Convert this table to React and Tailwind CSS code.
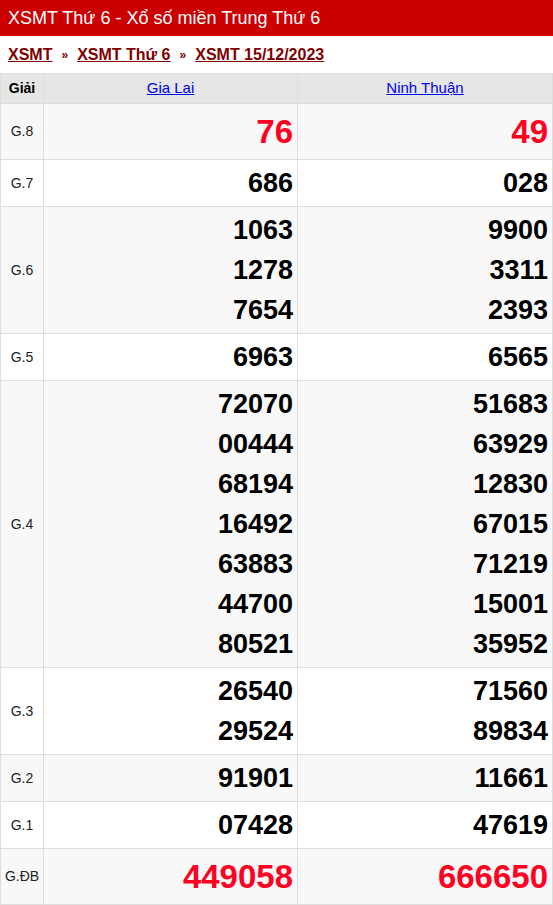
const rows = [
  { label: "G.8", a: ["76"], b: ["49"], big: true },
  { label: "G.7", a: ["686"], b: ["028"] },
  { label: "G.6", a: ["1063", "1278", "7654"], b: ["9900", "3311", "2393"] },
  { label: "G.5", a: ["6963"], b: ["6565"] },
  {
    label: "G.4",
    a: ["72070", "00444", "68194", "16492", "63883", "44700", "80521"],
    b: ["51683", "63929", "12830", "67015", "71219", "15001", "35952"],
  },
  { label: "G.3", a: ["26540", "29524"], b: ["71560", "89834"] },
  { label: "G.2", a: ["91901"], b: ["11661"] },
  { label: "G.1", a: ["07428"], b: ["47619"] },
  { label: "G.ĐB", a: ["449058"], b: ["666650"], big: true },
];

function NumCell({ nums, big, shade }) {
  return (
    <td className={`border border-[#dddddd] px-[4px] py-[3px] text-right align-middle ${shade}`}>
      {nums.map((n) => (
        <div
          key={n}
          className={
            big
              ? "text-[33px] leading-[49px] font-bold text-[#ff0022]"
              : "text-[27px] leading-[40px] font-bold text-black"
          }
        >
          {n}
        </div>
      ))}
    </td>
  );
}

export default function App() {
  return (
    <div className="w-[553px] bg-white font-['Liberation_Sans',Arial,sans-serif]">
      <div className="h-[36px] bg-[#cc0000] px-[8px] flex items-center text-white text-[18px]">
        XSMT Thứ 6 - Xổ số miền Trung Thứ 6
      </div>
      <div className="h-[37px] px-[8px] flex items-center gap-[9px] text-[16px] font-bold text-[#800000]">
        <a className="underline">XSMT</a>
        <span className="text-[12px]">»</span>
        <a className="underline">XSMT Thứ 6</a>
        <span className="text-[12px]">»</span>
        <a className="underline">XSMT 15/12/2023</a>
      </div>
      <table className="w-[553px] border-collapse table-fixed">
        <colgroup>
          <col className="w-[43px]" />
          <col className="w-[254px]" />
          <col />
        </colgroup>
        <thead>
          <tr className="bg-[#e6e6e6] h-[30px]">
            <th className="border border-[#dddddd] text-[14px] font-bold text-black">Giải</th>
            <th className="border border-[#dddddd] text-[15px] font-normal">
              <a className="text-[#0000ee] underline">Gia Lai</a>
            </th>
            <th className="border border-[#dddddd] text-[15px] font-normal">
              <a className="text-[#0000ee] underline">Ninh Thuận</a>
            </th>
          </tr>
        </thead>
        <tbody>
          {rows.map((r, i) => {
            const shade = i % 2 === 0 ? "bg-[#f8f8f8]" : "bg-white";
            return (
              <tr key={r.label}>
                <td className={`border border-[#dddddd] text-center text-[14px] text-[#222222] ${shade}`}>
                  {r.label}
                </td>
                <NumCell nums={r.a} big={r.big} shade={shade} />
                <NumCell nums={r.b} big={r.big} shade={shade} />
              </tr>
            );
          })}
        </tbody>
      </table>
    </div>
  );
}
